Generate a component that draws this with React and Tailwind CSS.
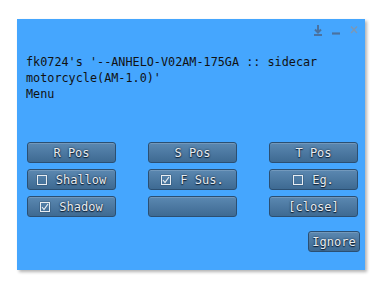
import React from "react";

function Btn({ children, w = "w-[89px]" }) {
  return (
    <div
      className={`${w} h-[21px] rounded-[3px] border border-[#2b4f72] bg-gradient-to-b from-[#5b88b1] to-[#3e6a92] flex items-center justify-center text-[12px] text-[#e8edf2] [text-shadow:0_0_2px_#0d1f33,0_1px_1px_#0d1f33] shadow-[inset_0_1px_0_rgba(255,255,255,0.15)]`}
    >
      {children}
    </div>
  );
}

function Box({ checked }) {
  return (
    <span className="inline-flex w-[10px] h-[10px] border border-[#e8edf2] mr-[9px] items-center justify-center shadow-[0_0_1px_#0d1f33]">
      {checked && (
        <svg width="8" height="8" viewBox="0 0 8 8">
          <path d="M1 4l2 2.5L7 1" stroke="#e8edf2" strokeWidth="1.2" fill="none" />
        </svg>
      )}
    </span>
  );
}

export default function App() {
  return (
    <div className="w-[387px] h-[290px] bg-white pl-[17px] pt-[19px] font-['DejaVu_Sans_Mono',monospace]">
      <div className="w-[348px] h-[251px] bg-[#45a6fe] shadow-[2px_2px_3px_rgba(0,0,0,0.3)] flex flex-col">
        <div className="h-[22px] flex items-start justify-end gap-[10px] pr-[7px] pt-[6px]">
          <svg width="8" height="11" viewBox="0 0 8 11">
            <path d="M4 0v7M1 4.5l3 3 3-3" stroke="#4a72a0" strokeWidth="2" fill="none" />
            <path d="M0 10h8" stroke="#4a72a0" strokeWidth="2" />
          </svg>
          <svg width="8" height="11" viewBox="0 0 8 11">
            <path d="M0 8.5h8" stroke="#4a72a0" strokeWidth="2.2" />
          </svg>
          <svg width="8" height="11" viewBox="0 0 8 11">
            <path d="M1 1.5l6 6.5M7 1.5l-6 6.5" stroke="#7a98b8" strokeWidth="1.5" />
          </svg>
        </div>
        <div className="pl-[9px] pt-[13px] text-[11.8px] leading-[16px] text-[#111]">
          <div>fk0724's '--ANHELO-V02AM-175GA :: sidecar</div>
          <div>motorcycle(AM-1.0)'</div>
          <div>Menu</div>
        </div>
        <div className="pl-[10px] pt-[40px] flex flex-col gap-[6px]">
          <div className="flex gap-[32px]">
            <Btn>R Pos</Btn>
            <Btn>S Pos</Btn>
            <Btn>T Pos</Btn>
          </div>
          <div className="flex gap-[32px]">
            <Btn><Box />Shallow</Btn>
            <Btn><Box checked />F Sus.</Btn>
            <Btn><Box />Eg.</Btn>
          </div>
          <div className="flex gap-[32px]">
            <Btn><Box checked />Shadow</Btn>
            <Btn>{""}</Btn>
            <Btn>[close]</Btn>
          </div>
        </div>
        <div className="flex justify-end pr-[5px] pt-[14px]">
          <Btn w="w-[52px]">Ignore</Btn>
        </div>
      </div>
    </div>
  );
}
